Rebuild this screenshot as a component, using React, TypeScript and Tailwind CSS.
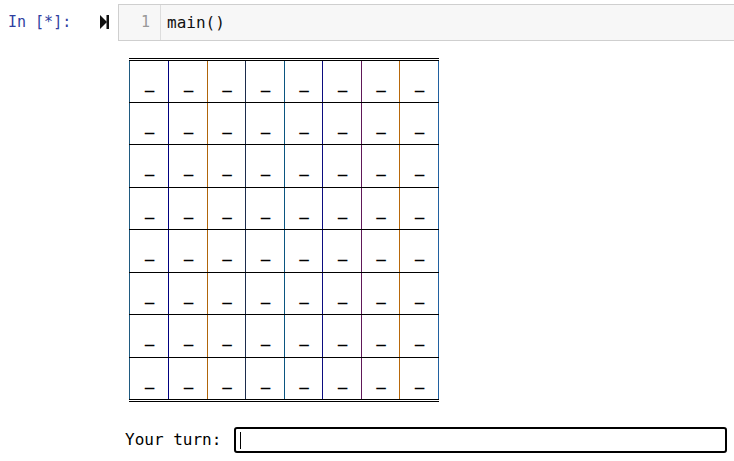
import React from "react";

const colW = [39, 39, 38, 39, 38, 39, 38, 39];
const rowH = [42, 42, 43, 42, 43, 42, 43, 42];
const vColors = ["#1f5a80", "#000080", "#b0650a", "#1c2c4c", "#0a5580", "#0c0c80", "#601858", "#b8680a"];

export default function App() {
  const mono = { fontFamily: '"DejaVu Sans Mono", "Liberation Mono", monospace' };
  return (
    <div className="w-[734px] h-[461px] bg-white overflow-hidden relative" style={mono}>
      {/* code cell row */}
      <div className="flex items-start pt-[4px]">
        <div className="w-[118px] h-[36px] flex items-center relative">
          <span className="ml-[8px] text-[15px] text-[#303f9f]">In [*]:</span>
          <svg className="absolute left-[99px] top-[11px]" width="11" height="14" viewBox="0 0 11 14">
            <polygon points="1,0 8,7 1,14" fill="#111" />
            <rect x="7.5" y="0" width="2.5" height="14" fill="#111" />
          </svg>
        </div>
        <div className="flex-1 h-[37px] border border-[#cfcfcf] bg-[#f7f7f7] flex border-r-0">
          <div className="w-[42px] h-full border-r border-[#dddddd] flex items-center justify-end pr-[10px] text-[15px] text-[#999999]">
            1
          </div>
          <div className="flex items-center pl-[6px] text-[16px] text-[#111]">main()</div>
        </div>
      </div>

      {/* board */}
      <div className="ml-[129px] mt-[17px] w-[310px]">
        <div className="h-[2px] border-t border-black" />
        <div className="border-t border-black">
          {rowH.map((h, r) => (
            <div key={r} className="flex border-b border-black" style={{ height: h }}>
              {colW.map((w, c) => (
                <div
                  key={c}
                  className="flex justify-center items-start border-l text-[16px] font-bold text-black leading-none"
                  style={{ width: w, borderLeftColor: vColors[c] }}
                >
                  <span className="mt-[15px] ml-[1px]">_</span>
                </div>
              ))}
              <div className="w-0 border-r border-[#2060a0]" />
            </div>
          ))}
        </div>
        <div className="h-[2px] border-b border-black" />
      </div>

      {/* input row */}
      <div className="flex items-center mt-[25px]">
        <span className="ml-[125px] text-[16px] text-black">Your turn:</span>
        <div className="ml-[13px] w-[493px] h-[26px] border-2 border-black rounded-[3px] flex items-center">
          <div className="ml-[4px] w-[1px] h-[17px] bg-black" />
        </div>
      </div>
    </div>
  );
}
